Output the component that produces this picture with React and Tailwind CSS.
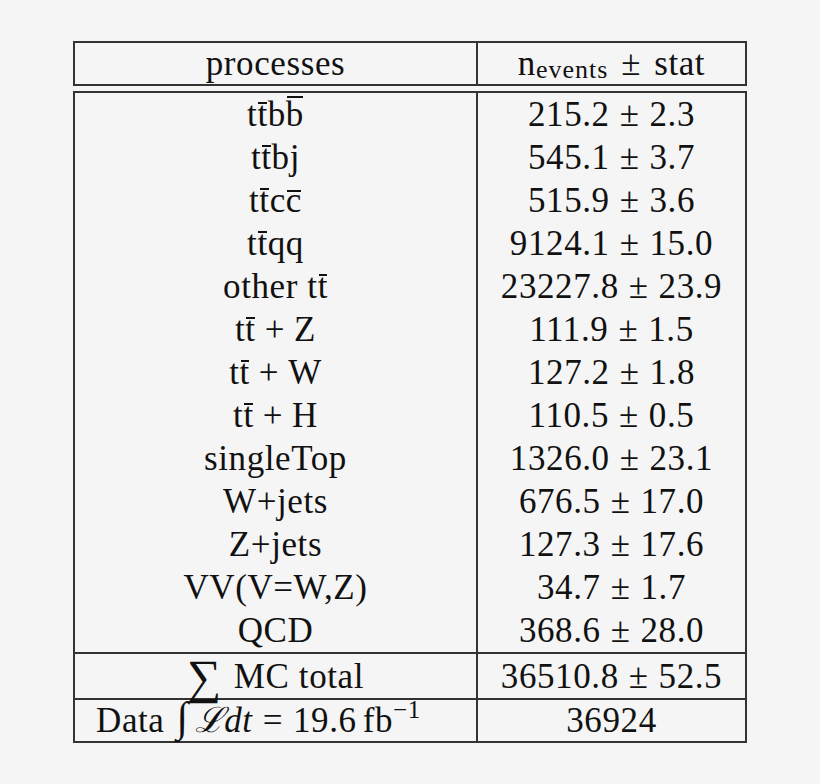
import React from 'react'

const font = { fontFamily: '"Liberation Serif", "DejaVu Serif", serif' }

function Bar({ children, top = 'top-[5px]' }) {
  return (
    <span className="relative inline-block">
      {children}
      <span className={`absolute left-[1px] right-[1px] h-[2px] bg-[#111] ${top}`} />
    </span>
  )
}

const ttbar = <>t<Bar>t</Bar></>
const plus = <span className="mx-[9px]">+</span>

const rows = [
  [<>{ttbar}b<Bar top="top-[-1px]">b</Bar></>, '215.2', '2.3'],
  [<>{ttbar}bj</>, '545.1', '3.7'],
  [<>{ttbar}c<Bar top="top-[7px]">c</Bar></>, '515.9', '3.6'],
  [<>{ttbar}qq</>, '9124.1', '15.0'],
  [<>other&nbsp;{ttbar}</>, '23227.8', '23.9'],
  [<>{ttbar}{plus}Z</>, '111.9', '1.5'],
  [<>{ttbar}{plus}W</>, '127.2', '1.8'],
  [<>{ttbar}{plus}H</>, '110.5', '0.5'],
  [<>singleTop</>, '1326.0', '23.1'],
  [<>W+jets</>, '676.5', '17.0'],
  [<>Z+jets</>, '127.3', '17.6'],
  [<>VV(V=W,Z)</>, '34.7', '1.7'],
  [<>QCD</>, '368.6', '28.0'],
]

function Val({ v, e }) {
  return <>{v}<span className="mx-[10px]">±</span>{e}</>
}

export default function App() {
  return (
    <div className="w-[820px] h-[784px] bg-[#f5f5f5] pt-[41px] pl-[73px] text-[#111] text-[35px] tracking-[0.6px]" style={font}>
      <div className="w-[674px] border-2 border-[#333] flex h-[45px] items-center leading-none">
        <div className="w-[403px] h-full border-r-2 border-[#333] flex items-center justify-center">processes</div>
        <div className="flex-1 flex items-center justify-center">
          n<span className="text-[26px] tracking-[1px] translate-y-[6px] inline-block">events</span>
          <span className="mx-[13px]">±</span>stat
        </div>
      </div>
      <div className="mt-[5px] w-[674px] border-2 border-[#333] leading-none">
        <div className="flex">
          <div className="w-[403px] border-r-2 border-[#333]">
            {rows.map((r, i) => (
              <div key={i} className="h-[43px] flex items-center justify-center">{r[0]}</div>
            ))}
          </div>
          <div className="flex-1">
            {rows.map((r, i) => (
              <div key={i} className="h-[43px] flex items-center justify-center"><Val v={r[1]} e={r[2]} /></div>
            ))}
          </div>
        </div>
        <div className="flex h-[46px] border-t-2 border-[#333]">
          <div className="w-[403px] border-r-2 border-[#333] flex items-center justify-center">
            <span className="text-[48px] translate-y-[1px] inline-block mr-[12px]">∑</span>MC&nbsp;total
          </div>
          <div className="flex-1 flex items-center justify-center"><Val v="36510.8" e="52.5" /></div>
        </div>
        <div className="flex h-[43px] border-t-2 border-[#333]">
          <div className="w-[403px] border-r-2 border-[#333] flex items-center justify-start pl-[21px]">
            Data<span className="italic text-[42px] ml-[12px] mr-[6px] -translate-y-[4px] inline-block">∫</span>
            <span className="italic">ℒdt</span><span className="mx-[10px]">=</span>19.6<span className="ml-[6px]">fb</span>
            <span className="text-[25px] -translate-y-[11px] inline-block">−1</span>
          </div>
          <div className="flex-1 flex items-center justify-center">36924</div>
        </div>
      </div>
    </div>
  )
}
